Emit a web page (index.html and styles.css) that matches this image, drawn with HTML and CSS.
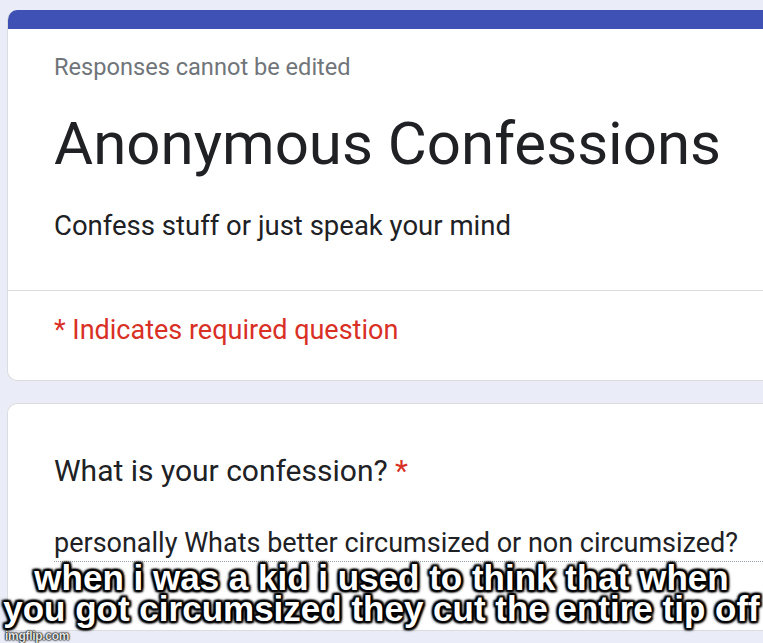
FILE: index.html
```html
<!DOCTYPE html>
<html>
<head>
<meta charset="utf-8">
<link rel="stylesheet" href="styles.css">
</head>
<body>
<div class="page">
  <section class="card card-header">
    <div class="band"></div>
    <div class="head-body">
      <div class="note">Responses cannot be edited</div>
      <h1 class="title">Anonymous Confessions</h1>
      <div class="desc">Confess stuff or just speak your mind</div>
    </div>
    <div class="divider"></div>
    <div class="required">* Indicates required question</div>
  </section>
  <section class="card card-question">
    <div class="question">What is your confession? <span class="star">*</span></div>
    <div class="answer">personally Whats better circumsized or non circumsized?</div>
  </section>
</div>
<div class="caption">when i was a kid i used to think that when<br>you got circumsized they cut the entire tip off</div>
<div class="watermark">imgflip.com</div>
</body>
</html>
```
FILE: styles.css
```css
html, body {
  margin: 0;
  padding: 0;
}
body {
  width: 763px;
  height: 643px;
  overflow: hidden;
  background: #eaedf7;
  font-family: Roboto, "Noto Sans", sans-serif;
  color: #202124;
  position: relative;
}
.page {
  padding: 10px 0 0 7px;
  display: flex;
  flex-direction: column;
  gap: 22px;
}
.card {
  background: #fff;
  border: 1px solid #dadce0;
  border-right: none;
  border-radius: 10px 0 0 10px;
}
.card-header {
  border-top: none;
  overflow: hidden;
}
.band {
  height: 19px;
  background: #3f51b5;
}
.head-body {
  padding: 24px 0 48px 46px;
}
.note {
  font-size: 23.6px;
  line-height: 28px;
  color: #70757a;
}
.title {
  margin: 27px 0 0;
  font-size: 60px;
  line-height: 72px;
  font-weight: 400;
  color: #202124;
}
.desc {
  margin-top: 30px;
  font-size: 27.5px;
  line-height: 32px;
}
.divider {
  height: 1px;
  background: #dadce0;
}
.required {
  padding: 24px 0 35px 46px;
  font-size: 27px;
  line-height: 30px;
  color: #d93025;
}
.card-question {
  height: 228px;
  padding: 51px 0 0 46px;
  box-sizing: border-box;
}
.question {
  font-size: 30px;
  line-height: 32px;
}
.star {
  color: #d93025;
}
.answer {
  margin-top: 41px;
  font-size: 27px;
  line-height: 30px;
  padding-bottom: 3px;
  border-bottom: 1px dotted #9aa0a6;
}
.caption {
  position: absolute;
  left: -20px;
  right: -20px;
  top: 562px;
  text-align: center;
  font-family: "Liberation Sans", Arial, sans-serif;
  font-weight: 700;
  font-size: 35px;
  line-height: 31px;
  color: #fff;
  white-space: nowrap;
  letter-spacing: 0;
  text-shadow: 2px 2px 2px #000, -2px -2px 2px #000, 2px -2px 2px #000, -2px 2px 2px #000,
    0 2px 2px #000, 0 -2px 2px #000, 2px 0 2px #000, -2px 0 2px #000, 0 0 5px #000;
}
.watermark {
  position: absolute;
  left: 5px;
  bottom: 0;
  font-family: "Liberation Sans", Arial, sans-serif;
  font-weight: 700;
  font-size: 12px;
  line-height: 13px;
  letter-spacing: -0.3px;
  color: #e6e6e6;
  text-shadow: 0 0 2px #000, 0 0 2px #000, 0 0 1px #000;
}
```
